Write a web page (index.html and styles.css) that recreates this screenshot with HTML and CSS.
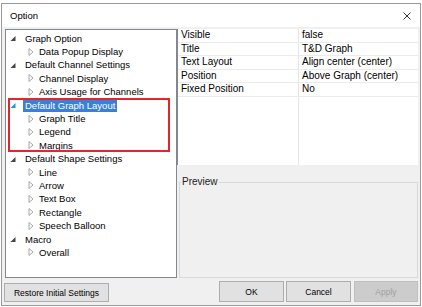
FILE: index.html
```html
<!DOCTYPE html>
<html lang="en">
<head>
  <meta charset="UTF-8" />
  <title>Option</title>
  <link rel="stylesheet" href="styles.css">
</head>
<body>

<div class="dialog">
  <div class="titlebar">
    <span class="title">Option</span>
    <svg class="close" width="8" height="8" viewBox="0 0 8 8"><path d="M0.5 0.5 L7.5 7.5 M7.5 0.5 L0.5 7.5" stroke="#333" stroke-width="1"/></svg>
  </div>

  <div class="main">
    <div class="left">
      <div class="tree">
        <div class="node open"><svg class="tw" width="6" height="8"><path d="M5.5 2 L5.5 7 L0.5 7 Z" fill="#444"/></svg>Graph Option</div>
        <div class="node child"><svg class="tw" width="6" height="8"><path d="M1 0.5 L5 4 L1 7.5 Z" fill="none" stroke="#a6a6a6"/></svg>Data Popup Display</div>
        <div class="node open"><svg class="tw" width="6" height="8"><path d="M5.5 2 L5.5 7 L0.5 7 Z" fill="#444"/></svg>Default Channel Settings</div>
        <div class="node child"><svg class="tw" width="6" height="8"><path d="M1 0.5 L5 4 L1 7.5 Z" fill="none" stroke="#a6a6a6"/></svg>Channel Display</div>
        <div class="node child"><svg class="tw" width="6" height="8"><path d="M1 0.5 L5 4 L1 7.5 Z" fill="none" stroke="#a6a6a6"/></svg>Axis Usage for Channels</div>
        <div class="group">
          <div class="node open"><svg class="tw" width="6" height="8"><path d="M5.5 2 L5.5 7 L0.5 7 Z" fill="#1c97ea"/></svg><span class="sel">Default Graph Layout</span></div>
          <div class="node child"><svg class="tw" width="6" height="8"><path d="M1 0.5 L5 4 L1 7.5 Z" fill="none" stroke="#a6a6a6"/></svg>Graph Title</div>
          <div class="node child"><svg class="tw" width="6" height="8"><path d="M1 0.5 L5 4 L1 7.5 Z" fill="none" stroke="#a6a6a6"/></svg>Legend</div>
          <div class="node child"><svg class="tw" width="6" height="8"><path d="M1 0.5 L5 4 L1 7.5 Z" fill="none" stroke="#a6a6a6"/></svg>Margins</div>
        </div>
        <div class="node open"><svg class="tw" width="6" height="8"><path d="M5.5 2 L5.5 7 L0.5 7 Z" fill="#444"/></svg>Default Shape Settings</div>
        <div class="node child"><svg class="tw" width="6" height="8"><path d="M1 0.5 L5 4 L1 7.5 Z" fill="none" stroke="#a6a6a6"/></svg>Line</div>
        <div class="node child"><svg class="tw" width="6" height="8"><path d="M1 0.5 L5 4 L1 7.5 Z" fill="none" stroke="#a6a6a6"/></svg>Arrow</div>
        <div class="node child"><svg class="tw" width="6" height="8"><path d="M1 0.5 L5 4 L1 7.5 Z" fill="none" stroke="#a6a6a6"/></svg>Text Box</div>
        <div class="node child"><svg class="tw" width="6" height="8"><path d="M1 0.5 L5 4 L1 7.5 Z" fill="none" stroke="#a6a6a6"/></svg>Rectangle</div>
        <div class="node child"><svg class="tw" width="6" height="8"><path d="M1 0.5 L5 4 L1 7.5 Z" fill="none" stroke="#a6a6a6"/></svg>Speech Balloon</div>
        <div class="node open"><svg class="tw" width="6" height="8"><path d="M5.5 2 L5.5 7 L0.5 7 Z" fill="#444"/></svg>Macro</div>
        <div class="node child"><svg class="tw" width="6" height="8"><path d="M1 0.5 L5 4 L1 7.5 Z" fill="none" stroke="#a6a6a6"/></svg>Overall</div>
      </div>
      <button class="btn restore">Restore Initial Settings</button>
    </div>

    <div class="right">
      <div class="props">
        <div class="cell">Visible</div><div class="cell val">false</div>
        <div class="cell">Title</div><div class="cell val">T&amp;D Graph</div>
        <div class="cell">Text Layout</div><div class="cell val">Align center (center)</div>
        <div class="cell">Position</div><div class="cell val">Above Graph (center)</div>
        <div class="cell">Fixed Position</div><div class="cell val">No</div>
      </div>
      <fieldset class="preview">
        <legend>Preview</legend>
      </fieldset>
      <div class="actions">
        <button class="btn">OK</button>
        <button class="btn">Cancel</button>
        <button class="btn disabled">Apply</button>
      </div>
    </div>
  </div>
</div>

</body>
</html>
```

FILE: styles.css
```css
* {
  box-sizing: border-box;
}
html, body {
  margin: 0;
  padding: 0;
  background: #fff;
  font-family: "Liberation Sans", Arial, sans-serif;
}

.dialog {
  width: 420px;
  height: 303px;
  margin: 3px 0 0 1px;
  border: 1px solid #9a9a9a;
  background: #f0f0f0;
  display: flex;
  flex-direction: column;
}

.titlebar {
  height: 23px;
  flex: none;
  background: #fff;
  display: flex;
  align-items: center;
  justify-content: space-between;
  padding: 0 9px 0 8px;
}

.title {
  font-size: 9.5px;
  color: #000;
}

.main {
  flex: 1;
  display: flex;
  padding: 2px 2px 3px 3px;
}

.left {
  width: 172px;
  display: flex;
  flex-direction: column;
}

.tree {
  flex: 1;
  background: #fff;
  border: 1px solid #828790;
  padding-top: 1.5px;
  font-size: 9.5px;
  color: #000;
}

.node {
  height: 13.4px;
  display: flex;
  align-items: center;
  padding-left: 4px;
  white-space: nowrap;
}

.node .tw {
  flex: none;
  margin-right: 9px;
}

.node.child {
  padding-left: 22px;
}

.node.child .tw {
  margin-right: 5px;
}

.sel {
  background: #3b80d8;
  color: #fff;
  padding: 0 2px;
  margin-left: -2px;
  line-height: 13px;
}

.group {
  position: relative;
}

.group::after {
  content: '';
  position: absolute;
  left: 2px;
  right: 6px;
  top: 0;
  bottom: 0;
  border: 2px solid #e3262d;
}

.btn {
  font-family: "Liberation Sans", Arial, sans-serif;
  font-size: 8.5px;
  color: #000;
  background: #e1e1e1;
  border: 1px solid #adadad;
  height: 21px;
  width: 65px;
  padding: 0;
}

.restore {
  width: 105px;
  height: 19px;
  margin: 5px 0 0 -1px;
}

.right {
  flex: 1;
  display: flex;
  flex-direction: column;
}

.props {
  height: 136px;
  flex: none;
  background: #fff linear-gradient(#e6e6e6, #e6e6e6) no-repeat 120px 0 / 1px 100%;
  border-left: 1px solid #828790;
  display: grid;
  grid-template-columns: 120px 1fr;
  grid-auto-rows: 13.5px;
  align-content: start;
  font-size: 10px;
  color: #000;
}

.cell {
  border-bottom: 1px solid #ececec;
  padding-left: 3px;
  line-height: 12.5px;
  white-space: nowrap;
}

.cell.val {
  padding-left: 4px;
}

.preview {
  flex: 1;
  margin: 11px 0 0 2px;
  padding: 0;
  border: 1px solid #d9d9d9;
  min-width: 0;
}

.preview legend {
  font-size: 10px;
  color: #222;
  padding: 0 1px;
  margin-left: 1px;
  line-height: 12px;
}

.actions {
  display: flex;
  justify-content: flex-end;
  gap: 2px;
  margin-top: 3px;
}

.btn.disabled {
  background: #cccccc;
  border-color: #bfbfbf;
  color: #a0a0a0;
  width: 64px;
  margin-left: 1px;
}
```
